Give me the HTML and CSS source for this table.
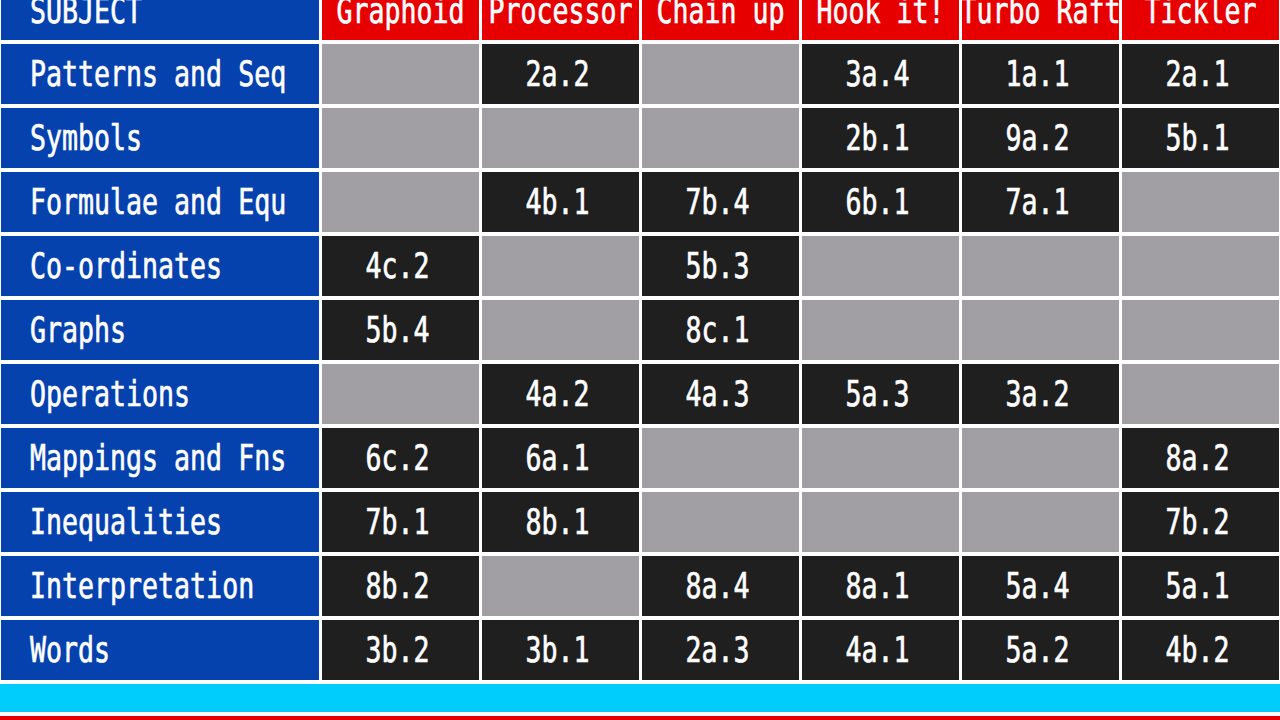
FILE: index.html
```html
<!DOCTYPE html>
<html>
<head>
<meta charset="utf-8">
<link rel="stylesheet" href="styles.css">
</head>
<body>
<div class="screen">
  <div class="table">
    <div class="cell head subj"><span class="t">SUBJECT</span></div>
    <div class="cell head"><span class="t">Graphoid</span></div>
    <div class="cell head"><span class="t">Processor</span></div>
    <div class="cell head"><span class="t">Chain up</span></div>
    <div class="cell head"><span class="t">Hook it!</span></div>
    <div class="cell head"><span class="t">Turbo Raft</span></div>
    <div class="cell head"><span class="t">Tickler</span></div>

    <div class="cell label"><span class="t">Patterns and Seq</span></div>
    <div class="cell empty"></div>
    <div class="cell code"><span class="t">2a.2</span></div>
    <div class="cell empty"></div>
    <div class="cell code"><span class="t">3a.4</span></div>
    <div class="cell code"><span class="t">1a.1</span></div>
    <div class="cell code"><span class="t">2a.1</span></div>

    <div class="cell label"><span class="t">Symbols</span></div>
    <div class="cell empty"></div>
    <div class="cell empty"></div>
    <div class="cell empty"></div>
    <div class="cell code"><span class="t">2b.1</span></div>
    <div class="cell code"><span class="t">9a.2</span></div>
    <div class="cell code"><span class="t">5b.1</span></div>

    <div class="cell label"><span class="t">Formulae and Equ</span></div>
    <div class="cell empty"></div>
    <div class="cell code"><span class="t">4b.1</span></div>
    <div class="cell code"><span class="t">7b.4</span></div>
    <div class="cell code"><span class="t">6b.1</span></div>
    <div class="cell code"><span class="t">7a.1</span></div>
    <div class="cell empty"></div>

    <div class="cell label"><span class="t">Co-ordinates</span></div>
    <div class="cell code"><span class="t">4c.2</span></div>
    <div class="cell empty"></div>
    <div class="cell code"><span class="t">5b.3</span></div>
    <div class="cell empty"></div>
    <div class="cell empty"></div>
    <div class="cell empty"></div>

    <div class="cell label"><span class="t">Graphs</span></div>
    <div class="cell code"><span class="t">5b.4</span></div>
    <div class="cell empty"></div>
    <div class="cell code"><span class="t">8c.1</span></div>
    <div class="cell empty"></div>
    <div class="cell empty"></div>
    <div class="cell empty"></div>

    <div class="cell label"><span class="t">Operations</span></div>
    <div class="cell empty"></div>
    <div class="cell code"><span class="t">4a.2</span></div>
    <div class="cell code"><span class="t">4a.3</span></div>
    <div class="cell code"><span class="t">5a.3</span></div>
    <div class="cell code"><span class="t">3a.2</span></div>
    <div class="cell empty"></div>

    <div class="cell label"><span class="t">Mappings and Fns</span></div>
    <div class="cell code"><span class="t">6c.2</span></div>
    <div class="cell code"><span class="t">6a.1</span></div>
    <div class="cell empty"></div>
    <div class="cell empty"></div>
    <div class="cell empty"></div>
    <div class="cell code"><span class="t">8a.2</span></div>

    <div class="cell label"><span class="t">Inequalities</span></div>
    <div class="cell code"><span class="t">7b.1</span></div>
    <div class="cell code"><span class="t">8b.1</span></div>
    <div class="cell empty"></div>
    <div class="cell empty"></div>
    <div class="cell empty"></div>
    <div class="cell code"><span class="t">7b.2</span></div>

    <div class="cell label"><span class="t">Interpretation</span></div>
    <div class="cell code"><span class="t">8b.2</span></div>
    <div class="cell empty"></div>
    <div class="cell code"><span class="t">8a.4</span></div>
    <div class="cell code"><span class="t">8a.1</span></div>
    <div class="cell code"><span class="t">5a.4</span></div>
    <div class="cell code"><span class="t">5a.1</span></div>

    <div class="cell label"><span class="t">Words</span></div>
    <div class="cell code"><span class="t">3b.2</span></div>
    <div class="cell code"><span class="t">3b.1</span></div>
    <div class="cell code"><span class="t">2a.3</span></div>
    <div class="cell code"><span class="t">4a.1</span></div>
    <div class="cell code"><span class="t">5a.2</span></div>
    <div class="cell code"><span class="t">4b.2</span></div>
  </div>
  <div class="bar-cyan"></div>
  <div class="bar-red"></div>
</div>
</body>
</html>
```
FILE: styles.css
```css
html, body {
  margin: 0;
  padding: 0;
  background: #ffffff;
  overflow: hidden;
}

.screen {
  width: 1280px;
  height: 720px;
  overflow: hidden;
  display: flex;
  flex-direction: column;
  gap: 4px;
}

.table {
  margin-top: -20px;
  padding-left: 1px;
  display: grid;
  grid-template-columns: 318px repeat(6, 157px);
  grid-auto-rows: 60px;
  column-gap: 3px;
  row-gap: 4px;
}

.cell {
  display: flex;
  align-items: center;
  justify-content: center;
  overflow: hidden;
  color: #ffffff;
  font-family: "DejaVu Sans Mono", "Liberation Mono", monospace;
  font-size: 26.6px;
  line-height: 1;
  white-space: pre;
  -webkit-text-stroke: 0.5px #ffffff;
}

.t {
  display: inline-block;
  transform: scaleY(1.36);
}

.head {
  background: #e60000;
  padding-top: 2px;
  box-sizing: border-box;
}

.subj {
  background: #0642ae;
  justify-content: flex-start;
  padding-left: 29px;
}

.label {
  background: #0642ae;
  justify-content: flex-start;
  padding-left: 29px;
}

.code {
  background: #1f1f1f;
  padding-right: 6px;
  box-sizing: border-box;
}

.empty {
  background: #a19fa3;
}

.bar-cyan {
  height: 28px;
  background: #00cdfc;
  flex: none;
}

.bar-red {
  height: 20px;
  background: #e60000;
  flex: none;
}
```
